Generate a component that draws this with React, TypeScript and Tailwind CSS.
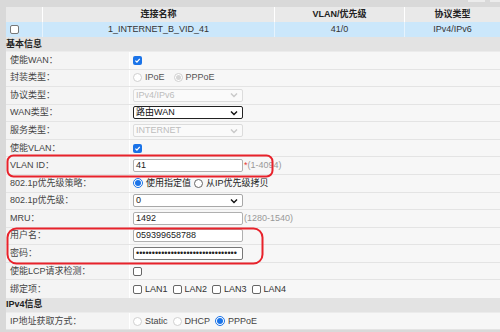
import React from "react";

const font = "font-['Liberation_Sans','Noto_Sans_CJK_SC',sans-serif]";

function Check({ checked = false }: { checked?: boolean }) {
  if (checked) {
    return (
      <span className="inline-flex w-[9px] h-[9px] rounded-[2px] bg-[#1a73e8] items-center justify-center">
        <svg width="7" height="7" viewBox="0 0 10 10">
          <path d="M2 5.2 L4.2 7.4 L8.2 2.8" fill="none" stroke="#fff" strokeWidth="1.8" />
        </svg>
      </span>
    );
  }
  return <span className="inline-block w-[9px] h-[9px] rounded-[2px] border border-[#666] bg-white" />;
}

function Radio({ checked = false, disabled = false }: { checked?: boolean; disabled?: boolean }) {
  if (checked && !disabled) {
    return (
      <span className="inline-flex w-[10px] h-[10px] rounded-full border border-[#1a73e8] bg-white items-center justify-center">
        <span className="w-[6px] h-[6px] rounded-full bg-[#1a73e8]" />
      </span>
    );
  }
  if (checked && disabled) {
    return (
      <span className="inline-flex w-[9px] h-[9px] rounded-full border border-[#d0d0d0] bg-white items-center justify-center">
        <span className="w-[5px] h-[5px] rounded-full bg-[#d6d6d6]" />
      </span>
    );
  }
  return (
    <span
      className={`inline-block w-[9px] h-[9px] rounded-full border bg-white ${disabled ? "border-[#d0d0d0]" : "border-[#666]"}`}
    />
  );
}

function Chevron({ color }: { color: string }) {
  return (
    <svg width="8" height="6" viewBox="0 0 8 6">
      <path d="M1 1.5 L4 4.5 L7 1.5" fill="none" stroke={color} strokeWidth="1.4" />
    </svg>
  );
}

function Select({ value, disabled = false, dark = false }: { value: string; disabled?: boolean; dark?: boolean }) {
  return (
    <div
      className={`w-[110px] h-[13px] flex items-center justify-between pl-[2px] pr-[4px] rounded-[2px] border ${
        disabled ? "border-[#dcdcdc] bg-[#fafafa] text-[#bdbdbd]" : dark ? "border-[#222] bg-white text-[#111]" : "border-[#a8a8a8] bg-white text-[#222]"
      }`}
    >
      <span>{value}</span>
      <Chevron color={disabled ? "#c8c8c8" : "#111"} />
    </div>
  );
}

function Input({ value, dark = false }: { value: string; dark?: boolean }) {
  return (
    <div
      className={`w-[110px] h-[13px] flex items-center px-[2px] rounded-[2px] bg-white text-[#222] overflow-hidden whitespace-nowrap border ${
        dark ? "border-[#777]" : "border-[#b0b0b0]"
      }`}
    >
      {value}
    </div>
  );
}

function Row({ label, children, last = false }: { label: string; children?: React.ReactNode; last?: boolean }) {
  return (
    <div className={`flex h-[17.57px] ${last ? "" : "border-b border-[#e4e4e4]"}`}>
      <div className="w-[124px] shrink-0 flex items-center pl-[4px] bg-[#f4f4f4] border-r border-white text-[#444]">
        {label}
      </div>
      <div className="flex-1 flex items-center pl-[3px] bg-[#f7f7f7] text-[#444]">{children}</div>
    </div>
  );
}

function Section({ title }: { title: string }) {
  return (
    <div className="h-[15px] flex items-center bg-[#e3e3e3] font-bold text-[#222] border-b border-[#ececec]">{title}</div>
  );
}

export default function App() {
  return (
    <div className={`relative w-[500px] h-[332px] overflow-hidden bg-[#d9d9d9] text-[9px] leading-none ${font}`}>
      {/* top strip */}
      <div className="h-[7px] flex justify-end items-start gap-[5px] pr-0">
        <span className="w-[17px] h-[2px] bg-[#ececec]" />
        <span className="w-[10px] h-[2px] bg-[#ececec]" />
      </div>

      <div className="ml-[6px]">
        {/* list header */}
        <div className="flex h-[15px] bg-[#e9e9e9] font-bold text-[#222]">
          <div className="w-[37px] border-r border-white" />
          <div className="w-[232px] flex items-center justify-center border-r border-white">连接名称</div>
          <div className="w-[130px] flex items-center justify-center border-r border-white">VLAN/优先级</div>
          <div className="flex-1 flex items-center justify-center">协议类型</div>
        </div>
        <div className="flex h-[15px] bg-[#cbe7fb] text-[#333]">
          <div className="w-[37px] flex items-center pl-[4px] border-r border-[#e6f3fd]">
            <span className="inline-block w-[9px] h-[9px] rounded-[2px] border border-[#777] bg-white" />
          </div>
          <div className="w-[232px] flex items-center justify-center border-r border-[#e6f3fd]">1_INTERNET_B_VID_41</div>
          <div className="w-[130px] flex items-center justify-center border-r border-[#e6f3fd]">41/0</div>
          <div className="flex-1 flex items-center justify-center">IPv4/IPv6</div>
        </div>

        <Section title="基本信息" />
        <Row label="使能WAN：">
          <Check checked />
        </Row>
        <Row label="封装类型：">
          <div className="flex items-center gap-[3px]">
            <Radio disabled />
            <span className="text-[#555]">IPoE</span>
            <span className="ml-[3px]" />
            <Radio checked disabled />
            <span className="text-[#555]">PPPoE</span>
          </div>
        </Row>
        <Row label="协议类型：">
          <Select value="IPv4/IPv6" disabled />
        </Row>
        <Row label="WAN类型：">
          <Select value="路由WAN" dark />
        </Row>
        <Row label="服务类型：">
          <Select value="INTERNET" disabled />
        </Row>
        <Row label="使能VLAN：">
          <Check checked />
        </Row>
        <Row label="VLAN ID：">
          <Input value="41" />
          <span className="ml-[1px] text-[#999]">
            <span className="text-[#e53935]">*</span>(1-4094)
          </span>
        </Row>
        <Row label="802.1p优先级策略：">
          <div className="flex items-center gap-[3px]">
            <Radio checked />
            <span className="text-[#222]">使用指定值</span>
            <Radio />
            <span className="text-[#222]">从IP优先级拷贝</span>
          </div>
        </Row>
        <Row label="802.1p优先级：">
          <Select value="0" />
        </Row>
        <Row label="MRU：">
          <Input value="1492" />
          <span className="ml-[1px] text-[#999]">(1280-1540)</span>
        </Row>
        <Row label="用户名：">
          <Input value="059399658788" />
        </Row>
        <Row label="密码：">
          <Input value="••••••••••••••••••••••••••••••••" dark />
        </Row>
        <Row label="使能LCP请求检测：">
          <Check />
        </Row>
        <Row label="绑定项：" last>
          <div className="flex items-center gap-[3px] text-[#333]">
            <Check />
            <span className="mr-[2px]">LAN1</span>
            <Check />
            <span className="mr-[2px]">LAN2</span>
            <Check />
            <span className="mr-[2px]">LAN3</span>
            <Check />
            <span>LAN4</span>
          </div>
        </Row>
        <Section title="IPv4信息" />
        <Row label="IP地址获取方式：">
          <div className="flex items-center gap-[3px] text-[#444]">
            <Radio disabled />
            <span className="mr-[2px]">Static</span>
            <Radio disabled />
            <span className="mr-[2px]">DHCP</span>
            <Radio checked />
            <span>PPPoE</span>
          </div>
        </Row>
      </div>

      {/* red annotations */}
      <svg className="absolute inset-0 pointer-events-none" width="500" height="332">
        <rect x="7.5" y="155.5" width="265" height="21" rx="6" fill="none" stroke="#e8222b" strokeWidth="2" />
        <rect x="7.5" y="228.5" width="255" height="35" rx="9" fill="none" stroke="#e8222b" strokeWidth="2" />
      </svg>
    </div>
  );
}
